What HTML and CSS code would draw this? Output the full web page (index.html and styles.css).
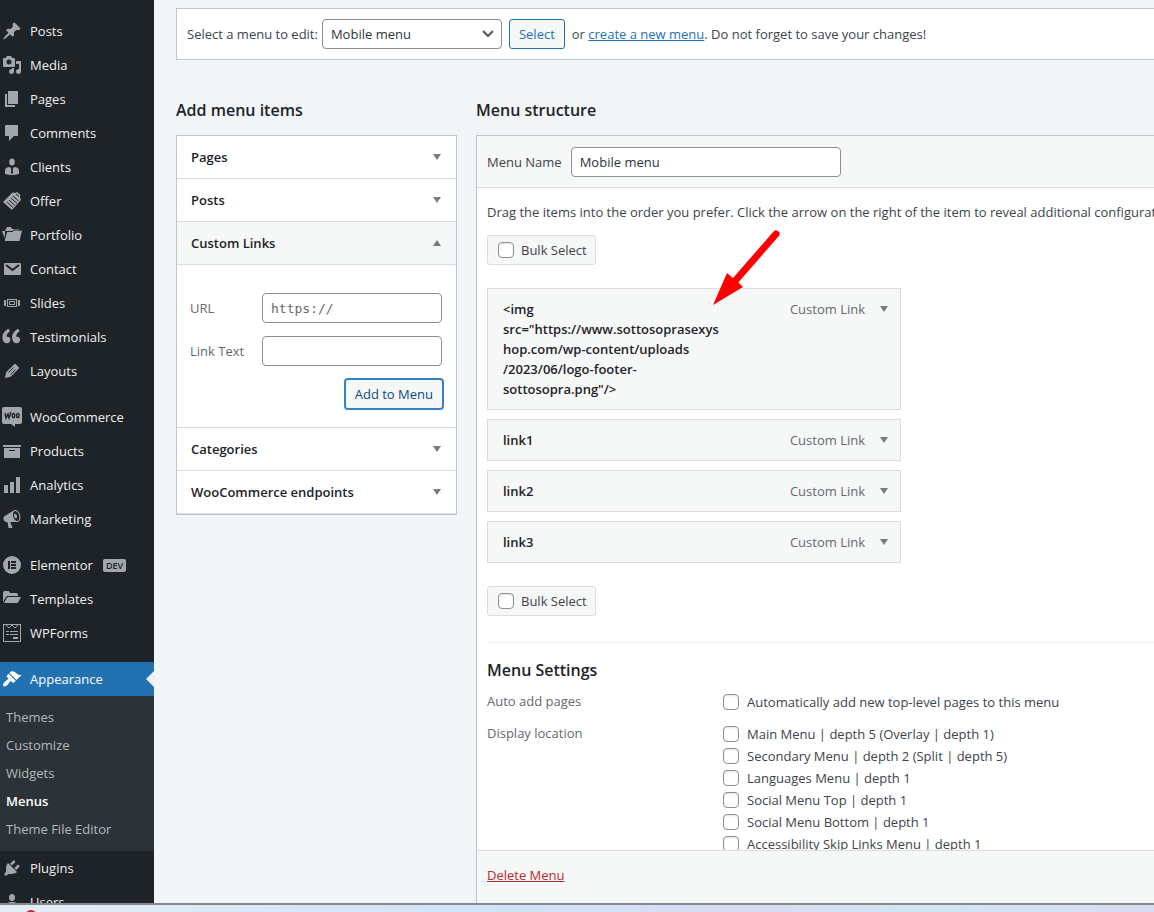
FILE: index.html
```html
<!DOCTYPE html>
<html lang="en">
<head>
<meta charset="utf-8">
<title>Menus</title>
<link rel="stylesheet" href="styles.css">
</head>
<body>
<div class="app">
  <nav class="sidebar" aria-label="Main menu">
    <ul class="nav-group">
      <li><a class="nav-link" href="#"><svg class="nav-icon" viewBox="0 0 20 20"><path d="M10.44 3.02l1.82-1.82 6.36 6.35-1.83 1.82c-1.05-.68-2.48-.57-3.41.36l-.75.75c-.92.93-1.04 2.35-.35 3.41l-1.83 1.82-2.41-2.41-2.8 2.79c-.42.42-3.38 2.71-3.8 2.29s1.86-3.39 2.28-3.81l2.79-2.79L4.1 9.36l1.83-1.82c1.05.69 2.48.57 3.4-.36l.75-.75c.93-.92 1.05-2.35.36-3.41z"/></svg>Posts</a></li>
      <li><a class="nav-link" href="#"><svg class="nav-icon" viewBox="0 0 20 20"><path d="M13 11V4c0-.55-.45-1-1-1h-1.67L9 1H5L3.67 3H2c-.55 0-1 .45-1 1v7c0 .55.45 1 1 1h10c.55 0 1-.45 1-1zM7 4.5c1.38 0 2.5 1.12 2.5 2.5S8.38 9.5 7 9.5 4.5 8.38 4.5 7 5.62 4.5 7 4.5zM14 6h5v10.5c0 1.38-1.12 2.5-2.5 2.5S14 17.88 14 16.5s1.12-2.5 2.5-2.5c.17 0 .34.02.5.05V9h-3V6zm-4 8.05V13h2v3.5c0 1.38-1.12 2.5-2.5 2.5S7 17.88 7 16.5 8.12 14 9.5 14c.17 0 .34.02.5.05z"/></svg>Media</a></li>
      <li><a class="nav-link" href="#"><svg class="nav-icon" viewBox="0 0 20 20"><path d="M6 15V2h10v13H6zm-1 1h8v2H3V5h2v11z"/></svg>Pages</a></li>
      <li><a class="nav-link" href="#"><svg class="nav-icon" viewBox="0 0 20 20"><path d="M4 2h11c.6 0 1 .4 1 1v9c0 .6-.4 1-1 1h-3l-5 5v-5H4c-.6 0-1-.4-1-1V3c0-.6.4-1 1-1z"/></svg>Comments</a></li>
      <li><a class="nav-link" href="#"><svg class="nav-icon" viewBox="0 0 20 20"><ellipse cx="10" cy="5" rx="2.8" ry="3.5"/><path d="M3 17v-3c0-2.600 1.500-4 5-4l1.200 1.800L9 16l1 1 1-1-.2-4.200L12 10c3.500 0 5 1.400 5 4v3c-4.500 1.300-9.500 1.300-14 0z"/></svg>Clients</a></li>
      <li><a class="nav-link" href="#"><svg class="nav-icon" viewBox="0 0 20 20"><path d="M1 11 10.500 1.500l3 .5 1.500-1 3.500 3-.5 2 1 3L10 19z"/><path class="cut" d="m5 11 6 5.500M7 9l6 5.500M9 7l6 5.500M11 5l5.500 5M14 3l3 2.500"/></svg>Offer</a></li>
      <li><a class="nav-link" href="#"><svg class="nav-icon" viewBox="0 0 20 20"><path d="M0 6h3l-.3 8zM4 4l1-2h4l1 2h7v2H3z"/><path d="M4.500 7h6l1-1.500H20L17.500 16H2.500z"/><path class="cut" d="M4 6.500h6.500L12 5h7M4.500 7 2 16"/></svg>Portfolio</a></li>
      <li><a class="nav-link" href="#"><svg class="nav-icon" viewBox="0 0 20 20"><rect x="2" y="4" width="17" height="12" rx="1"/><path class="cut wide" d="m4 6 6.500 5L17 6"/></svg>Contact</a></li>
      <li><a class="nav-link" href="#"><svg class="nav-icon" viewBox="0 0 20 20"><path d="M2 7h2v6H2zM16 7h2v6h-2zM5 6h10v8H5zM6 7v6h8V7zM7 8h6v1H7zM7 11h6v1H7z" fill-rule="evenodd"/><path d="M7 8h1v4H7zM12 8h1v4h-1z"/></svg>Slides</a></li>
      <li><a class="nav-link" href="#"><svg class="nav-icon" viewBox="0 0 20 20"><g transform="translate(-3 -3) scale(1.200)"><path d="M9.490 13.220c0-.74-.2-1.380-.61-1.900-.62-.78-1.830-.88-2.530-.72-.29-1.650 1.110-3.750 2.920-4.650L7.880 4c-2.730 1.300-5.420 4.280-4.960 8.050C3.210 14.430 4.590 16 6.540 16c.85 0 1.560-.25 2.120-.75s.83-1.180.83-2.030zm8.050 0c0-.74-.2-1.380-.61-1.900-.63-.78-1.830-.88-2.530-.72-.29-1.650 1.110-3.750 2.920-4.650L15.930 4c-2.730 1.300-5.410 4.280-4.950 8.050.29 2.380 1.660 3.950 3.610 3.950.85 0 1.560-.25 2.120-.75s.83-1.180.83-2.030z"/></g></svg>Testimonials</a></li>
      <li><a class="nav-link" href="#"><svg class="nav-icon" viewBox="0 0 20 20"><path d="M13.890 3.390l2.710 2.720c.46.46.42 1.240.03 1.640l-8.010 8.020-5.560 1.160 1.160-5.580s7.600-7.630 7.990-8.030c.39-.39 1.220-.39 1.680.07z"/><path class="cut" d="M11.500 6.500 6.500 11.500M13.500 8.500l-5 5"/></svg>Layouts</a></li>
    </ul>
    <ul class="nav-group">
      <li><a class="nav-link" href="#"><svg class="nav-icon" viewBox="0 0 20 20"><path d="M2 0h16a2 2 0 0 1 2 2v13a2 2 0 0 1-2 2h-5v3l-4-3H2a2 2 0 0 1-2-2V2a2 2 0 0 1 2-2z"/><path class="cut bold" d="m3 6 1 5 2-4 1 4 2-6"/><ellipse class="cut bold" cx="11.500" cy="8.500" rx="1.300" ry="2"/><ellipse class="cut bold" cx="15.800" cy="8.500" rx="1.300" ry="2"/></svg>WooCommerce</a></li>
      <li><a class="nav-link" href="#"><svg class="nav-icon" viewBox="0 0 20 20"><path d="M1 4h18v2H1zM2 7h16v10H2zM7 9v1h6V9z" fill-rule="evenodd"/></svg>Products</a></li>
      <li><a class="nav-link" href="#"><svg class="nav-icon" viewBox="0 0 20 20"><path d="M2 10h4v8H2zM8 7h4v11H8zM14 2h4v16h-4z"/></svg>Analytics</a></li>
      <li><a class="nav-link" href="#"><svg class="nav-icon" viewBox="0 0 20 20"><path d="M18.150 5.940c.46 1.620.38 3.220-.02 4.480-.42 1.280-1.260 2.180-2.300 2.480-.16.06-.26.06-.4.06-.06.02-.12.02-.18.02-.06.02-.14.02-.22.02h-6.800l2.220 5.500c.02.14-.06.26-.14.34-.08.1-.24.16-.34.16H6.950c-.1 0-.26-.06-.34-.16-.08-.08-.16-.2-.14-.34l-1-5.500H4.250l-.02-.02c-.5.06-1.080-.18-1.540-.62s-.88-1.080-1.060-1.880c-.24-.8-.2-1.560-.02-2.200.18-.62.580-1.080 1.060-1.300l.02-.02 9-5.400c.1-.06.18-.1.24-.16.06-.04.14-.08.24-.12.16-.08.28-.12.5-.18 1.040-.3 2.240.1 3.220.98s1.840 2.240 2.260 3.860zm-2.580 5.980h-.02c.4-.1.74-.34 1.040-.7.58-.7.86-1.760.86-3.040 0-.64-.1-1.300-.28-1.980-.34-1.360-1.020-2.500-1.780-3.240s-1.680-1.100-2.460-.88c-.82.22-1.400.96-1.700 2-.32 1.040-.28 2.360.06 3.720.38 1.360 1 2.500 1.800 3.240.78.74 1.620 1.100 2.480.88zm-2.540-7.080c.22-.04.42-.02.62.04.38.16.76.48 1.020 1s.42 1.200.42 1.780c0 .3-.04.56-.12.8-.18.48-.44.84-.86.94-.34.1-.8-.06-1.140-.4s-.64-.86-.78-1.500c-.18-.62-.12-1.240.02-1.720s.48-.84.82-.94z"/></svg>Marketing</a></li>
    </ul>
    <ul class="nav-group">
      <li><a class="nav-link" href="#"><svg class="nav-icon" viewBox="0 0 20 20"><path d="M10 1a9 9 0 1 0 0 18 9 9 0 0 0 0-18zM6 6h2v8H6zM9 6h5v2H9zM9 9h5v2H9zM9 12h5v2H9z" fill-rule="evenodd"/></svg>Elementor<span class="tag">DEV</span></a></li>
      <li><a class="nav-link" href="#"><svg class="nav-icon" viewBox="0 0 20 20"><path d="M1 4c0-1 .5-2 1.500-2H6c1 0 1.500.5 2 2h6c1 0 2 .5 2 2v1H6c-1 0-1.500.5-2 1l-3 5zM6 8h13L16 13.500c-.4.500-1 .5-1.500.5H2l3-5.500z"/></svg>Templates</a></li>
      <li><a class="nav-link" href="#"><svg class="nav-icon" viewBox="0 0 20 20"><path d="M1 1h18v18H1zM2 2v16h16V2z" fill-rule="evenodd"/><path d="M4 8h3v1H4zM8 8h8v1H8zM4 11h3v1H4zM8 11h8v1H8zM11 14h5v2h-5z"/><path class="line" d="m4 2 3 3 3-3 3 3 3-3"/></svg>WPForms</a></li>
    </ul>
    <ul class="nav-group">
      <li>
        <a class="nav-link current" href="#"><svg class="nav-icon" viewBox="0 0 20 20"><path d="M14.480 11.060L7.410 3.990l1.500-1.500c.5-.56 2.300-.47 3.510.32 1.210.8 1.430 1.280 2.910 2.100 1.180.64 2.450 1.260 4.450.85zm-.71.71L6.700 4.700 4.930 6.470c-.39.39-.39 1.020 0 1.410l1.060 1.060c.39.39.39 1.030 0 1.420-.6.6-1.430 1.110-2.210 1.690-.35.26-.7.53-1.010.84C1.430 14.230.4 16.080 1.400 17.070c.99 1 2.840-.03 4.180-1.360.31-.31.58-.66.85-1.020.57-.78 1.080-1.610 1.690-2.210.39-.39 1.020-.39 1.410 0l1.060 1.060c.39.39 1.020.39 1.410 0z"/></svg>Appearance</a>
        <ul class="submenu">
          <li><a href="#">Themes</a></li>
          <li><a href="#">Customize</a></li>
          <li><a href="#">Widgets</a></li>
          <li><a class="active" href="#">Menus</a></li>
          <li><a href="#">Theme File Editor</a></li>
        </ul>
      </li>
      <li><a class="nav-link" href="#"><svg class="nav-icon" viewBox="0 0 20 20"><path d="M13.110 4.360L9.870 7.600 8 5.730l3.240-3.240c.35-.34 1.050-.2 1.560.32.52.51.66 1.210.31 1.550zm-8 1.770l.91-1.120 9.010 9.010-1.190.84c-.71.71-2.630 1.160-3.820 1.160H6.140L4.900 17.260c-.59.59-1.540.59-2.120 0-.59-.58-.59-1.530 0-2.120l1.240-1.240v-3.880c0-1.130.4-3.190 1.090-3.890zm7.260 3.970l3.240-3.240c.34-.35 1.040-.21 1.550.31.52.51.66 1.210.31 1.550l-3.240 3.250z"/></svg>Plugins</a></li>
      <li><a class="nav-link" href="#"><svg class="nav-icon" viewBox="0 0 20 20"><ellipse cx="10" cy="5.500" rx="3" ry="3.500"/><path d="M3 17c0-5 2-7 7-7s7 2 7 7z"/></svg>Users</a></li>
    </ul>
  </nav>

  <main class="content">
    <form class="manage">
      <label for="menu-select">Select a menu to edit:</label>
      <span class="select-wrap">
        <select id="menu-select" class="field"><option>Mobile menu</option></select>
        <svg class="chevron" viewBox="0 0 12 8"><path d="m1 1 5 5 5-5"/></svg>
      </span>
      <button class="button" type="button">Select</button>
      <span class="manage-note">or <a href="#">create a new menu</a>. Do not forget to save your changes!</span>
    </form>

    <div class="columns">
      <section class="add-items">
        <h2 class="heading">Add menu items</h2>
        <div class="accordion">
          <button class="accordion-title" type="button">Pages<span class="caret"></span></button>
          <button class="accordion-title" type="button">Posts<span class="caret"></span></button>
          <button class="accordion-title open" type="button">Custom Links<span class="caret up"></span></button>
          <form class="accordion-body">
            <div class="row"><label for="url">URL</label><input id="url" class="field mono" type="text" placeholder="https://"></div>
            <div class="row"><label for="link-text">Link Text</label><input id="link-text" class="field" type="text"></div>
            <button class="button focused" type="button">Add to Menu</button>
          </form>
          <button class="accordion-title" type="button">Categories<span class="caret"></span></button>
          <button class="accordion-title" type="button">WooCommerce endpoints<span class="caret"></span></button>
        </div>
      </section>

      <section class="structure">
        <h2 class="heading">Menu structure</h2>
        <div class="panel">
          <div class="panel-head">
            <label for="menu-name">Menu Name</label>
            <input id="menu-name" class="field" type="text" value="Mobile menu">
          </div>
          <div class="panel-body">
            <p class="hint">Drag the items into the order you prefer. Click the arrow on the right of the item to reveal additional configuration</p>
            <label class="bulk"><input class="check" type="checkbox">Bulk Select</label>
            <ul class="items">
              <li class="item"><span class="item-title">&lt;img<br>src="https://www.sottosoprasexys<br>hop.com/wp-content/uploads<br>/2023/06/logo-footer-<br>sottosopra.png"/&gt;</span><span class="item-type">Custom Link</span><button class="toggle" type="button" aria-label="Edit image item"><span class="caret"></span></button></li>
              <li class="item"><span class="item-title">link1</span><span class="item-type">Custom Link</span><button class="toggle" type="button" aria-label="Edit link1"><span class="caret"></span></button></li>
              <li class="item"><span class="item-title">link2</span><span class="item-type">Custom Link</span><button class="toggle" type="button" aria-label="Edit link2"><span class="caret"></span></button></li>
              <li class="item"><span class="item-title">link3</span><span class="item-type">Custom Link</span><button class="toggle" type="button" aria-label="Edit link3"><span class="caret"></span></button></li>
            </ul>
            <label class="bulk"><input class="check" type="checkbox">Bulk Select</label>
            <div class="settings">
              <h3 class="heading">Menu Settings</h3>
              <fieldset class="setting">
                <legend>Auto add pages</legend>
                <div class="options">
                  <label><input class="check" type="checkbox">Automatically add new top-level pages to this menu</label>
                </div>
              </fieldset>
              <fieldset class="setting">
                <legend>Display location</legend>
                <div class="options">
                  <label><input class="check" type="checkbox">Main Menu | depth 5 (Overlay | depth 1)</label>
                  <label><input class="check" type="checkbox">Secondary Menu | depth 2 (Split | depth 5)</label>
                  <label><input class="check" type="checkbox">Languages Menu | depth 1</label>
                  <label><input class="check" type="checkbox">Social Menu Top | depth 1</label>
                  <label><input class="check" type="checkbox">Social Menu Bottom | depth 1</label>
                  <label><input class="check" type="checkbox">Accessibility Skip Links Menu | depth 1</label>
                </div>
              </fieldset>
            </div>
            <svg class="pointer" viewBox="0 0 68 76"><path class="shaft" d="M64 4 23 51"/><path d="M1 75 15 43l6 5 5 4 5 5z"/></svg>
          </div>
          <div class="panel-foot"><a href="#">Delete Menu</a></div>
        </div>
      </section>
    </div>
  </main>
</div>
<div class="desktop-edge"><span class="dot"></span></div>
</body>
</html>
```
FILE: styles.css
```css
* { box-sizing: border-box; }

body {
  margin: 0;
  height: 100vh;
  display: flex;
  flex-direction: column;
  overflow: hidden;
  background: #f1f5f8;
  color: #3c434a;
  font: 13px/20px "Segoe UI", "Open Sans", "Noto Sans", sans-serif;
}

ul { list-style: none; margin: 0; padding: 0; }
button, input, select { font: inherit; color: inherit; margin: 0; }

.app { flex: 1; min-height: 0; display: flex; overflow: hidden; }

/* Sidebar */
.sidebar {
  flex: none;
  width: 154px;
  padding-top: 14px;
  overflow: hidden;
  background: #1d2327;
}
.nav-group + .nav-group { margin-top: 12px; }
.nav-link {
  position: relative;
  display: flex;
  align-items: center;
  height: 34px;
  padding-left: 2px;
  gap: 8px;
  color: #f0f0f1;
  text-decoration: none;
}
.nav-icon { flex: none; width: 20px; height: 20px; fill: #a2a7ad; }
.nav-icon .cut { fill: none; stroke: #1d2327; stroke-width: 1; }
.nav-icon .bold { stroke-width: 1.4; }
.nav-icon .wide { stroke-width: 2; }
.nav-icon .line { fill: none; stroke: #a2a7ad; stroke-width: 1; }
.tag {
  margin-left: 2px;
  padding: 0 3px;
  border-radius: 2px;
  background: #a2a7ad;
  color: #1d2327;
  font-size: 9px;
  font-weight: 600;
  line-height: 13px;
}
.nav-link.current { background: #2271b1; color: #fff; }
.nav-link.current .nav-icon { fill: #fff; }
.nav-link.current::after {
  content: "";
  position: absolute;
  right: 0;
  top: 9px;
  border: 8px solid transparent;
  border-left: 0;
  border-right-color: #f0f0f1;
}
.submenu { padding: 7px 0 8px; background: #2c3338; }
.submenu a {
  display: block;
  padding-left: 6px;
  color: #b4b9be;
  line-height: 28px;
  text-decoration: none;
}
.submenu .active { color: #fff; font-weight: 600; }

/* Content */
.content {
  flex: 1;
  min-width: 0;
  display: flex;
  flex-direction: column;
  padding: 8px 0 0 22px;
}
.field {
  height: 30px;
  padding: 0 8px;
  border: 1px solid #8c8f94;
  border-radius: 4px;
  background: #fff;
  color: #2c3338;
}
.button {
  height: 30px;
  padding: 0 9px;
  border: 1px solid #2271b1;
  border-radius: 3px;
  background: #f6f7f7;
  color: #2271b1;
  white-space: nowrap;
}
.button.focused { border-color: #3582c4; box-shadow: 0 0 0 1px #3582c4; color: #0a4b78; }
.check {
  appearance: none;
  flex: none;
  width: 16px;
  height: 16px;
  border: 1px solid #8c8f94;
  border-radius: 4px;
  background: #fff;
  box-shadow: inset 0 1px 2px rgba(0, 0, 0, .1);
}
.caret {
  flex: none;
  border: 4px solid transparent;
  border-top: 6px solid #787c82;
  border-bottom: 0;
}
.caret.up { border-top: 0; border-bottom: 6px solid #787c82; }
.heading {
  margin: 0;
  color: #1d2327;
  font-size: 16px;
  font-weight: 600;
  line-height: 24px;
}

.manage {
  display: flex;
  align-items: center;
  height: 52px;
  padding-left: 10px;
  border: 1px solid #c3c4c7;
  border-right: 0;
  background: #fff;
  white-space: nowrap;
}
.select-wrap { position: relative; display: flex; width: 180px; margin: 0 7px 0 4px; }
.select-wrap .field { width: 100%; appearance: none; }
.chevron {
  position: absolute;
  right: 8px;
  top: 11px;
  width: 12px;
  height: 8px;
  fill: none;
  stroke: #50575e;
  stroke-width: 2;
}
.manage-note { margin-left: 7px; }
.manage-note a { color: #2271b1; }

.columns { flex: 1; min-height: 0; display: flex; gap: 19px; padding-top: 38px; }
.columns h2 { margin-bottom: 13px; }
.add-items { flex: none; width: 281px; }
.accordion { border: 1px solid #c3c4c7; background: #fff; }
.accordion-title {
  display: flex;
  align-items: center;
  justify-content: space-between;
  width: 100%;
  height: 43px;
  padding: 0 15px 0 14px;
  border: 0;
  border-bottom: 1px solid #dcdcde;
  background: #fff;
  color: #1d2327;
  font-weight: 600;
  text-align: left;
}
.accordion-title.open { background: #f6f7f7; }
.accordion-body {
  display: flex;
  flex-direction: column;
  gap: 13px;
  padding: 28px 13px 18px;
  border-bottom: 1px solid #dcdcde;
}
.row { display: flex; align-items: center; justify-content: space-between; color: #646970; padding-right: 1px; }
.row .field { width: 180px; }
.mono { font-family: "DejaVu Sans Mono", monospace; }
.mono::placeholder { color: #646970; }
.accordion-body .button { align-self: flex-end; }

.structure { flex: 1; min-width: 0; display: flex; flex-direction: column; }
.panel {
  flex: 1;
  min-height: 0;
  display: flex;
  flex-direction: column;
  border: 1px solid #c3c4c7;
  border-right: 0;
  border-bottom: 0;
  background: #fff;
}
.panel-head {
  flex: none;
  display: flex;
  align-items: center;
  gap: 9px;
  height: 52px;
  padding-left: 10px;
  border-bottom: 1px solid #dcdcde;
  background: #f6f7f7;
}
.panel-head .field { width: 270px; }
.panel-body { position: relative; flex: 1; min-height: 0; padding: 14px 0 0 10px; overflow: hidden; }
.hint { margin: 0 0 13px; white-space: nowrap; }
.bulk {
  display: flex;
  align-items: center;
  gap: 7px;
  width: max-content;
  height: 30px;
  padding: 0 8px 0 10px;
  border: 1px solid #dcdcde;
  border-radius: 3px;
  background: #f6f7f7;
}
.items { display: flex; flex-direction: column; gap: 9px; max-width: 414px; margin: 23px 0; }
.item {
  display: flex;
  align-items: flex-start;
  padding: 10px 12px 10px 15px;
  border: 1px solid #dcdcde;
  background: #f6f7f7;
}
.item-title { flex: 1; color: #1d2327; font-weight: 600; }
.item-type { color: #646970; }
.toggle {
  display: flex;
  align-items: center;
  height: 20px;
  margin-left: 15px;
  padding: 0;
  border: 0;
  background: none;
}
.settings { margin-top: 26px; padding-top: 15px; border-top: 1px solid #f0f0f1; }
.settings h3 { margin-bottom: 9px; }
.setting { display: flex; margin: 0 0 10px; padding: 0; border: 0; }
.setting legend { float: left; width: 236px; padding: 0; color: #646970; }
.options { display: flex; flex-direction: column; }
.options label { display: flex; align-items: center; gap: 8px; height: 22px; white-space: nowrap; }
.panel-foot {
  flex: none;
  height: 53px;
  padding: 14px 10px;
  border-top: 1px solid #dcdcde;
  background: #f6f7f7;
}
.panel-foot a { color: #b32d2e; }

/* Red annotation arrow */
.pointer {
  position: absolute;
  left: 235px;
  top: 42px;
  width: 68px;
  height: 76px;
  fill: #f00;
}
.shaft { stroke: #f00; stroke-width: 7; stroke-linecap: round; }

/* Strip below the window */
.desktop-edge {
  flex: none;
  height: 9px;
  padding-left: 25px;
  overflow: hidden;
  border-top: 2px solid #85878c;
  background: linear-gradient(90deg, #e3edf7, #d0e3f8 45%, #d8dcf2 65%, #d0e6f6 80%, #d8dcf2);
}
.dot { display: block; width: 12px; height: 12px; margin-top: 5px; border-radius: 50%; background: #c62828; }
```
